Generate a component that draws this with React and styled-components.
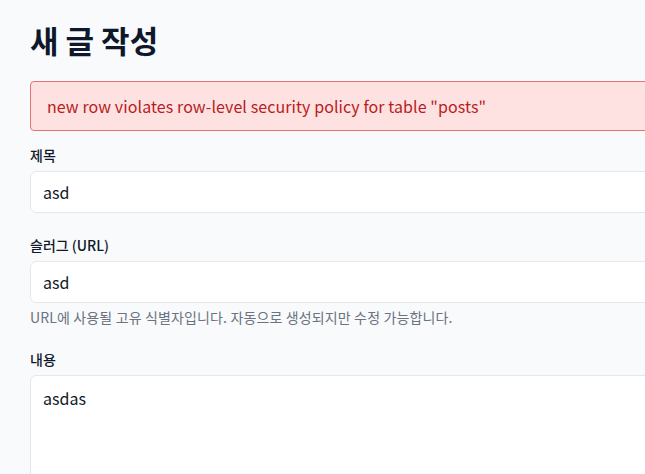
import styled, { createGlobalStyle } from 'styled-components'

const GlobalStyle = createGlobalStyle`
  html, body {
    margin: 0;
    padding: 0;
    background: #f8fafc;
    font-family: "Noto Sans CJK KR", "Noto Sans", sans-serif;
    color: #111827;
  }
  * { box-sizing: border-box; }
`

const Page = styled.div`
  width: 800px;
  padding: 20px 30px;
`

const Heading = styled.h1`
  margin: 0 0 21px;
  font-size: 31px;
  font-weight: 700;
  line-height: 40px;
  color: #0f172a;
`

const Alert = styled.div`
  background: #fee2e2;
  border: 1px solid #e57373;
  border-radius: 4px;
  padding: 0 16px;
  height: 50px;
  display: flex;
  align-items: center;
  color: #b91c1c;
  font-size: 16px;
  letter-spacing: 0.08px;
  margin-bottom: 14px;
`

const Form = styled.form`
  display: flex;
  flex-direction: column;
  gap: 22px;
`

const Field = styled.div`
  display: flex;
  flex-direction: column;
`

const Label = styled.label`
  font-size: 14px;
  font-weight: 500;
  line-height: 20px;
  margin-bottom: 6px;
  color: #111827;
`

const Input = styled.input`
  height: 42px;
  padding: 0 12px;
  font-family: inherit;
  font-size: 16px;
  color: #111827;
  background: #fff;
  border: 1px solid #e5e7eb;
  border-radius: 6px;
  outline: none;
`

const TextArea = styled.textarea`
  height: 200px;
  padding: 10px 12px;
  font-family: inherit;
  font-size: 16px;
  color: #111827;
  background: #fff;
  border: 1px solid #e5e7eb;
  border-radius: 6px;
  resize: vertical;
  outline: none;
`

const Help = styled.p`
  margin: 4px 0 0;
  font-size: 14px;
  line-height: 20px;
  letter-spacing: 0.14px;
  color: #6b7280;
`

export default function App() {
  return (
    <>
      <GlobalStyle />
      <Page>
        <Heading>새 글 작성</Heading>
        <Alert>new row violates row-level security policy for table "posts"</Alert>
        <Form>
          <Field>
            <Label>제목</Label>
            <Input defaultValue="asd" />
          </Field>
          <Field>
            <Label>슬러그 (URL)</Label>
            <Input defaultValue="asd" />
            <Help>URL에 사용될 고유 식별자입니다. 자동으로 생성되지만 수정 가능합니다.</Help>
          </Field>
          <Field>
            <Label>내용</Label>
            <TextArea defaultValue="asdas" />
          </Field>
        </Form>
      </Page>
    </>
  )
}
